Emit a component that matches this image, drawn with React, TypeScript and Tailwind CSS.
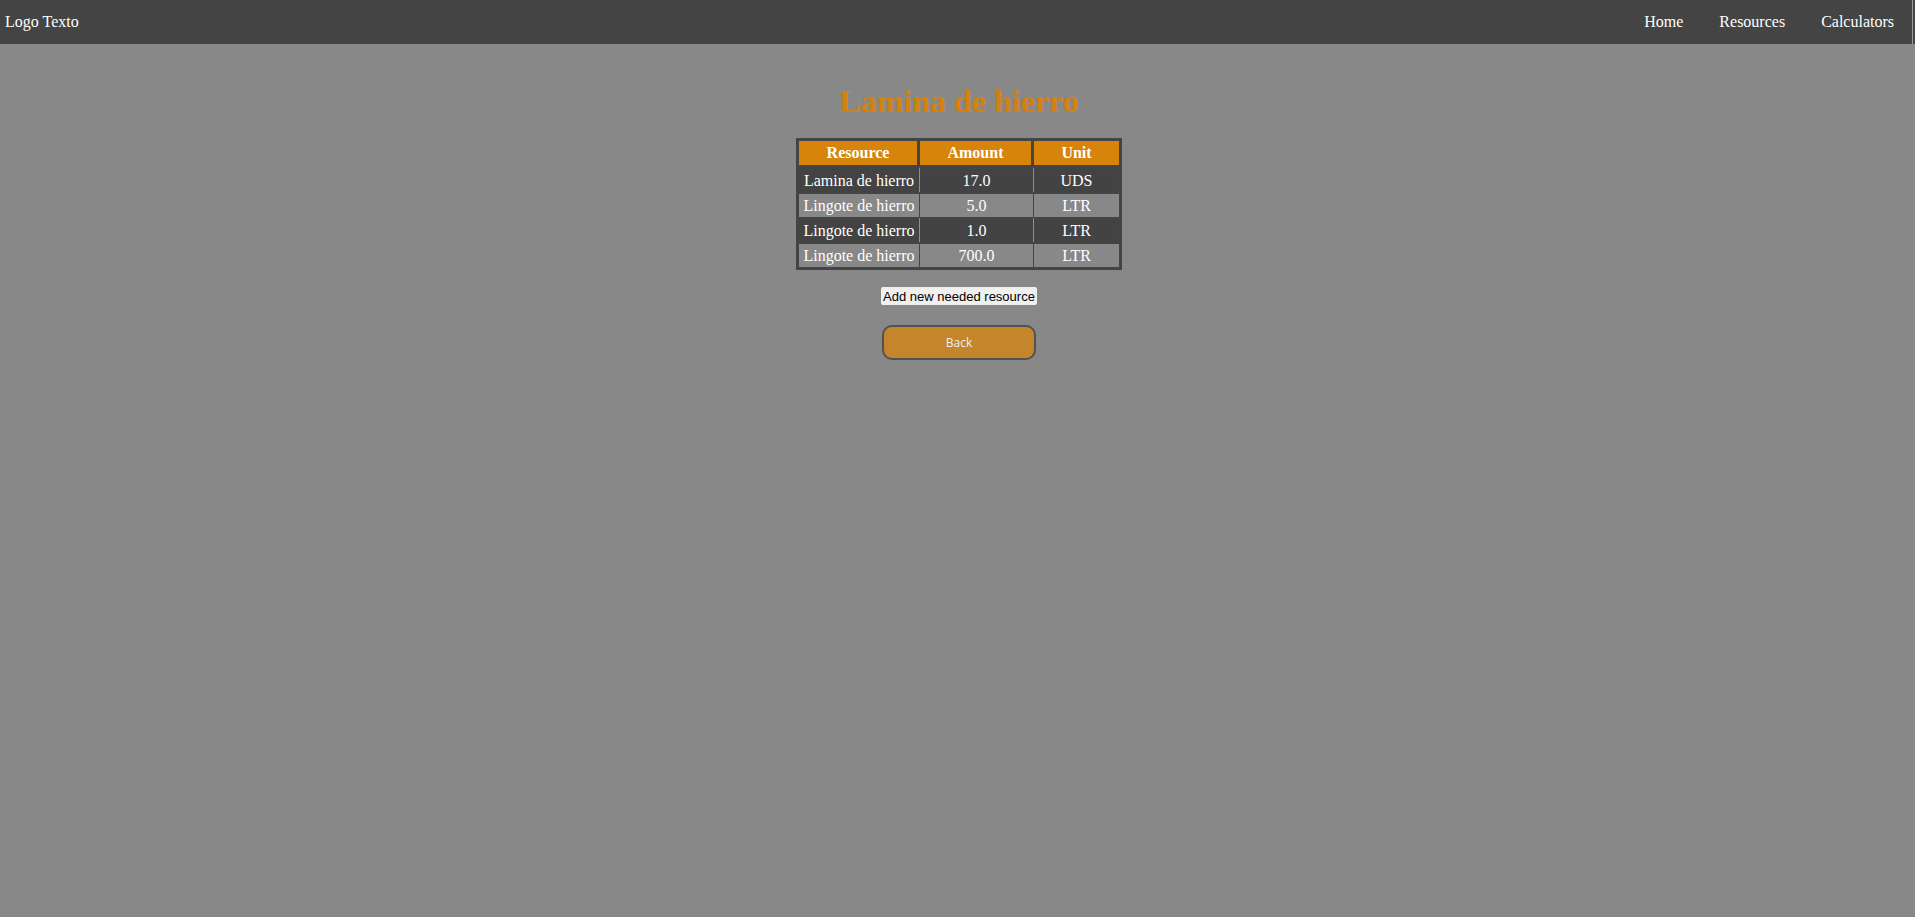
const rows = [
  { resource: 'Lamina de hierro', amount: '17.0', unit: 'UDS' },
  { resource: 'Lingote de hierro', amount: '5.0', unit: 'LTR' },
  { resource: 'Lingote de hierro', amount: '1.0', unit: 'LTR' },
  { resource: 'Lingote de hierro', amount: '700.0', unit: 'LTR' },
];

const Navbar = () => (
  <nav className="flex h-[44px] items-center justify-between bg-[#444444] font-['Liberation_Serif',serif] text-base text-white">
    <span className="pl-[5px]">Logo Texto</span>
    <div className="flex h-full items-center">
      {['Home', 'Resources', 'Calculators'].map((item) => (
        <a key={item} href="#" className="px-[18px]">
          {item}
        </a>
      ))}
      {/* thin light edge at the far right */}
      <span className="mr-[2px] h-full w-px bg-[#9a9a9a]" />
    </div>
  </nav>
);

export default function App() {
  return (
    <div className="min-h-screen bg-[#888888]">
      <Navbar />

      <main className="flex flex-col items-center pl-[3px]">
        <h1 className="mt-[39px] font-['Liberation_Serif',serif] text-[32px] font-bold leading-[37px] text-[#d4820c]">
          Lamina de hierro
        </h1>

        {/* Needed resources */}
        <table className="mt-[18px] border-separate border-spacing-0 border-[3px] border-[#444444] bg-[#444444] font-['Liberation_Serif',serif] text-base leading-[18px] text-white">
          <thead>
            <tr>
              <th className="h-[26px] w-[121px] border-b-2 border-r-[3px] border-[#444444] bg-[#d6850a] p-0 font-bold">
                Resource
              </th>
              <th className="h-[26px] w-[114px] border-b-2 border-r-[3px] border-[#444444] bg-[#d6850a] p-0 font-bold">
                Amount
              </th>
              <th className="h-[26px] w-[85px] border-b-2 border-[#444444] bg-[#d6850a] p-0 font-bold">
                Unit
              </th>
            </tr>
          </thead>
          <tbody>
            {rows.map((row, i) => {
              const dark = i % 2 === 0;
              const bg = dark ? 'bg-[#434343]' : 'bg-[#888888]';
              const sep = dark ? 'border-r-[#8f8f8f]' : 'border-r-[#444444]';
              return (
                <tr key={i}>
                  <td className={`h-[25px] border-t-2 border-r border-t-[#444444] ${sep} ${bg} p-0 text-center`}>
                    {row.resource}
                  </td>
                  <td className={`h-[25px] border-t-2 border-r border-t-[#444444] ${sep} ${bg} p-0 text-center`}>
                    {row.amount}
                  </td>
                  <td className={`h-[25px] border-t-2 border-t-[#444444] ${bg} p-0 text-center`}>
                    {row.unit}
                  </td>
                </tr>
              );
            })}
          </tbody>
        </table>

        <button className="mt-[17px] flex h-[18px] w-[156px] items-center justify-center rounded-[2px] bg-[#f0f0f0] font-['Liberation_Sans',sans-serif] text-[13px] leading-none text-black">
          Add new needed resource
        </button>

        <button className="mt-[20px] flex h-[35px] w-[154px] items-center justify-center rounded-[10px] border-2 border-[#525252] bg-[#c5852a] font-['Open_Sans',sans-serif] text-[12px] text-[#eeeeee]">
          Back
        </button>
      </main>
    </div>
  );
}
